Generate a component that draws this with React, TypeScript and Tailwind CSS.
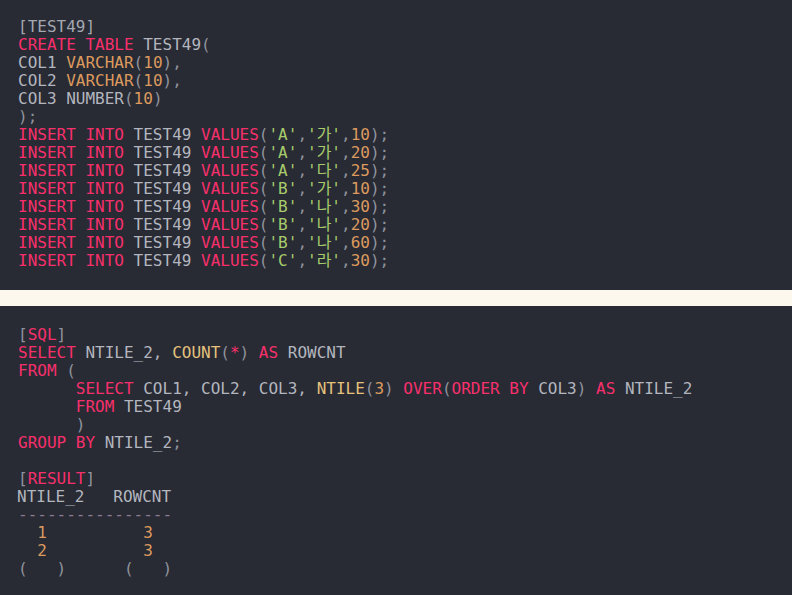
import React from "react";

type Tok = [string, string];

const C: Record<string, string> = {
  k: "text-[#f7306c]",
  t: "text-[#b3b6be]",
  p: "text-[#8f939c]",
  n: "text-[#dc9a5e]",
  s: "text-[#a7cc6c]",
  f: "text-[#e4c27c]",
  d: "text-[#8e7b93]",
  h: "text-[#a3a7b0]",
};

function Line({ toks, className = "" }: { toks: Tok[]; className?: string }) {
  return (
    <div className={"h-[18px] leading-[18px] whitespace-pre " + className}>
      {toks.length === 0 ? " " : toks.map((t, i) => (
        <span key={i} className={C[t[0]]}>
          {t[1]}
        </span>
      ))}
    </div>
  );
}

const inserts: [string, string, string][] = [
  ["A", "가", "10"],
  ["A", "가", "20"],
  ["A", "다", "25"],
  ["B", "가", "10"],
  ["B", "나", "30"],
  ["B", "나", "20"],
  ["B", "나", "60"],
  ["C", "라", "30"],
];

export default function App() {
  const top: Tok[][] = [
    [["h", "[TEST49]"]],
    [["k", "CREATE TABLE "], ["t", "TEST49"], ["p", "("]],
    [["t", "COL1 "], ["n", "VARCHAR"], ["p", "("], ["n", "10"], ["p", "),"]],
    [["t", "COL2 "], ["n", "VARCHAR"], ["p", "("], ["n", "10"], ["p", "),"]],
    [["t", "COL3 NUMBER"], ["p", "("], ["n", "10"], ["p", ")"]],
    [["p", ");"]],
    ...inserts.map(
      ([a, b, c]): Tok[] => [
        ["k", "INSERT INTO "],
        ["t", "TEST49 "],
        ["k", "VALUES"],
        ["p", "("],
        ["s", "'" + a + "'"],
        ["p", ","],
        ["s", "'" + b + "'"],
        ["p", ","],
        ["n", c],
        ["p", ");"],
      ]
    ),
  ];

  const bottom: Tok[][] = [
    [["p", "["], ["k", "SQL"], ["p", "]"]],
    [["k", "SELECT "], ["t", "NTILE_2, "], ["f", "COUNT"], ["p", "("], ["k", "*"], ["p", ") "], ["k", "AS "], ["t", "ROWCNT"]],
    [["k", "FROM "], ["p", "("]],
    [
      ["t", "      "],
      ["k", "SELECT "],
      ["t", "COL1, COL2, COL3, "],
      ["f", "NTILE"],
      ["p", "("],
      ["n", "3"],
      ["p", ") "],
      ["k", "OVER"],
      ["p", "("],
      ["k", "ORDER BY "],
      ["t", "COL3"],
      ["p", ") "],
      ["k", "AS "],
      ["t", "NTILE_2"],
    ],
    [["t", "      "], ["k", "FROM "], ["t", "TEST49"]],
    [["p", "      )"]],
    [["k", "GROUP BY "], ["t", "NTILE_2"], ["p", ";"]],
    [],
    [["p", "["], ["k", "RESULT"], ["p", "]"]],
  ];

  return (
    <div className="w-[792px] h-[595px] overflow-hidden bg-[#282a34] font-['DejaVu_Sans_Mono','Noto_Sans_CJK_KR',monospace] text-[16px] flex flex-col">
      <div className="h-[290px] pt-[18px] pl-[18px]">
        {top.map((l, i) => (
          <Line key={i} toks={l} />
        ))}
      </div>
      <div className="h-[16px] bg-[#fdf8ed]" />
      <div className="flex-1 pt-[20px] pl-[18px]">
        {bottom.map((l, i) => (
          <Line key={i} toks={l} />
        ))}
        <Line toks={[["t", "NTILE_2   ROWCNT"]]} className="-ml-[1px]" />
        <Line toks={[["d", "----------------"]]} />
        <Line toks={[["n", "  1          3"]]} />
        <Line toks={[["n", "  2          3"]]} />
        <Line toks={[["p", "(   )      (   )"]]} />
      </div>
    </div>
  );
}
